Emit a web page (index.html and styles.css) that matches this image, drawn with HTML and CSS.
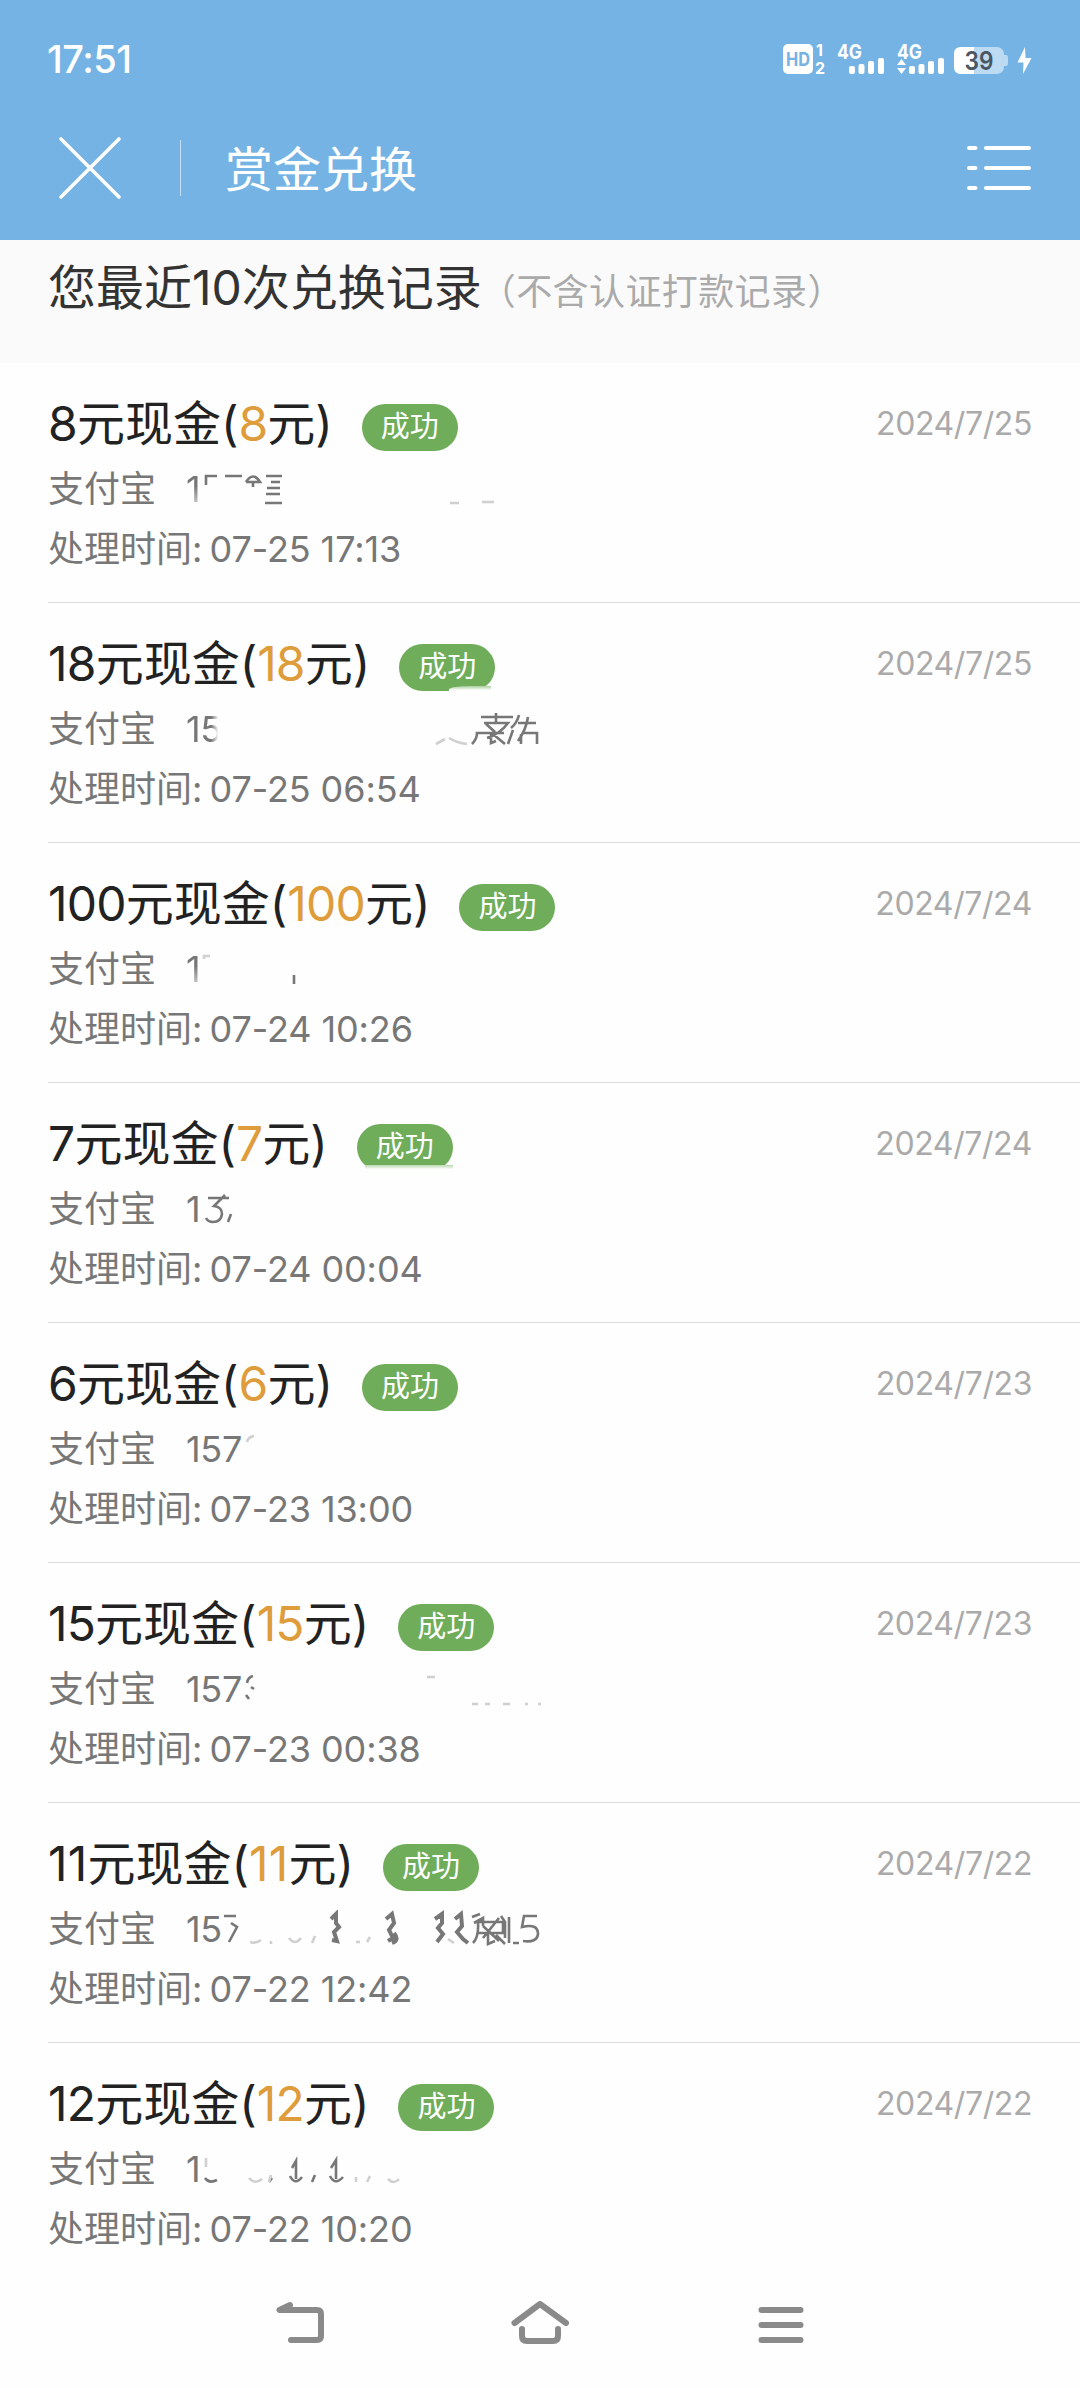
FILE: index.html
```html
<!DOCTYPE html>
<html lang="zh-CN">
<head>
    <meta charset="UTF-8">
    <meta name="viewport" content="width=device-width, initial-scale=1.0">
    <title>赏金兑换</title>
    <link rel="stylesheet" href="styles.css">
</head>
<body>
    <header>
        <div class="status-bar">
            <span class="clock">17:51</span>
            <svg class="status-icons" width="248" height="36" viewBox="783 41 248 36" fill="#fff">
                <!-- HD -->
                <rect x="783" y="44" width="30" height="30" rx="5"/>
                <text x="786" y="66" font-size="19" font-weight="700" fill="#74b3e3" textLength="24" lengthAdjust="spacingAndGlyphs">HD</text>
                <text x="816" y="56" font-size="16" font-weight="700">1</text>
                <text x="815" y="74" font-size="16" font-weight="700">2</text>
                <!-- SIM 1 -->
                <text x="837" y="59" font-size="20" font-weight="700" textLength="25" lengthAdjust="spacingAndGlyphs">4G</text>
                <rect x="849" y="66" width="6" height="8" rx="2"/>
                <rect x="858.5" y="64" width="6" height="10" rx="2"/>
                <rect x="868" y="61" width="6" height="13" rx="2"/>
                <rect x="878" y="58" width="6" height="16" rx="2"/>
                <!-- SIM 2 -->
                <text x="897" y="59" font-size="20" font-weight="700" textLength="25" lengthAdjust="spacingAndGlyphs">4G</text>
                <path d="M897 65l4.500-6 4.500 6zM897 68l4.500 6 4.500-6z"/>
                <rect x="909" y="66" width="6" height="8" rx="2"/>
                <rect x="918.500" y="64" width="6" height="10" rx="2"/>
                <rect x="928" y="61" width="6" height="13" rx="2"/>
                <rect x="938" y="58" width="6" height="16" rx="2"/>
                <!-- battery -->
                <rect x="954" y="47" width="50" height="27" rx="7" fill="#bcdaf2"/>
                <path d="M1004 55h2q2 0 2 3v5q0 3-2 3h-2z" fill="#bcdaf2"/>
                <path d="M961 47h13v27h-13q-7 0-7-7v-13q0-7 7-7z"/>
                <text x="964.500" y="69.500" font-size="25" font-weight="600" fill="#4a5662" textLength="29" lengthAdjust="spacingAndGlyphs">39</text>
                <path d="M1025 47l-7.500 15.500h6l-0.500 11.500 8.500-16h-6z"/>
            </svg>
        </div>
        <div class="nav">
            <svg class="close" width="64" height="64" viewBox="0 0 64 64" fill="none" stroke="#fff" stroke-width="3.600" stroke-linecap="round">
                <path d="M3 3l58 58M61 3L3 61"/>
            </svg>
            <i class="divider"></i>
            <h1>赏金兑换</h1>
            <svg class="menu" width="64" height="46" viewBox="0 0 64 46" fill="none" stroke="#fff" stroke-width="4" stroke-linecap="round">
                <path d="M2 3h6.500M19 3h43M2 23h6.500M19 23h43M2 43h6.500M19 43h43"/>
            </svg>
        </div>
    </header>

    <div class="section-title">
        <h2>您最近10次兑换记录</h2>
        <small>（不含认证打款记录）</small>
    </div>

    <ul class="records">
        <li>
            <div class="top">
                <span class="amount"><b>8</b>元现金(<em>8</em>元)</span><span class="badge">成功</span>
                <span class="date">2024/7/25</span>
            </div>
            <div class="pay">支付宝<span class="acct fade-down">1</span>
                <svg class="rub" width="370" height="40">
                    <path d="M19 15V6H30M38 6H55M59 12Q66 1 73 12H59M66 12V17M79 6H95M84 12H93M80 18H93M79 24H93M78 33H95"/>
                    <path class="faint" d="M263 33H272M295 32H307"/>
                </svg>
            </div>
            <div class="time">处理时间: <span class="n">07-25 17:13</span></div>
        </li>
        <li>
            <div class="top">
                <span class="amount"><b>18</b>元现金(<em>18</em>元)</span><span class="badge wiped-corner">成功</span>
                <span class="date">2024/7/25</span>
            </div>
            <div class="pay">支付宝<span class="acct fade-right">15</span>
                <svg class="rub" width="370" height="40">
                    <path class="faint" d="M249 34L258 29M262 28Q270 33 280 34"/>
                    <path d="M294 7H326M309 3V13M297 13H321Q313 24 300 28M299 14L308 22M285 34Q290 29 290 23H317M304 24V33L309 31M307 25L318 34M332 5Q330 13 324 18M326 20L321 34M331 13H349M341 7Q339 20 331 31M335 23H350V34M334 24V34"/>
                </svg>
            </div>
            <div class="time">处理时间: <span class="n">07-25 06:54</span></div>
        </li>
        <li>
            <div class="top">
                <span class="amount"><b>100</b>元现金(<em>100</em>元)</span><span class="badge">成功</span>
                <span class="date">2024/7/24</span>
            </div>
            <div class="pay">支付宝<span class="acct fade-down">1</span>
                <svg class="rub" width="370" height="40">
                    <path class="faint" d="M17 9V6H23"/>
                    <path d="M107 25V34"/>
                </svg>
            </div>
            <div class="time">处理时间: <span class="n">07-24 10:26</span></div>
        </li>
        <li>
            <div class="top">
                <span class="amount"><b>7</b>元现金(<em>7</em>元)</span><span class="badge wiped-bottom">成功</span>
                <span class="date">2024/7/24</span>
            </div>
            <div class="pay">支付宝<span class="acct">1</span>
                <svg class="rub" width="370" height="40">
                    <path d="M21 8H42M38 5L27 16Q35 17 35 24Q34 32 26 32Q21 32 19 28M44 24L41 32"/>
                </svg>
            </div>
            <div class="time">处理时间: <span class="n">07-24 00:04</span></div>
        </li>
        <li>
            <div class="top">
                <span class="amount"><b>6</b>元现金(<em>6</em>元)</span><span class="badge">成功</span>
                <span class="date">2024/7/23</span>
            </div>
            <div class="pay">支付宝<span class="acct">157</span>
                <svg class="rub" width="370" height="40">
                    <path class="faint" d="M60 12Q61 7 67 6"/>
                </svg>
            </div>
            <div class="time">处理时间: <span class="n">07-23 13:00</span></div>
        </li>
        <li>
            <div class="top">
                <span class="amount"><b>15</b>元现金(<em>15</em>元)</span><span class="badge">成功</span>
                <span class="date">2024/7/23</span>
            </div>
            <div class="pay">支付宝<span class="acct">157</span>
                <svg class="rub" width="370" height="40">
                    <path d="M60 13Q61 7 66 6M64 17L67 19M59 25L62 29"/>
                    <path class="faint" d="M240 7H248M285 34H291M298 34H303M316 34H323M338 34H341M351 34H354"/>
                </svg>
            </div>
            <div class="time">处理时间: <span class="n">07-23 00:38</span></div>
        </li>
        <li>
            <div class="top">
                <span class="amount ones"><b>11</b>元现金(<em>11</em>元)</span><span class="badge">成功</span>
                <span class="date">2024/7/22</span>
            </div>
            <div class="pay">支付宝<span class="acct">15</span>
                <svg class="rub" width="370" height="40">
                    <path d="M37 6H49M44 13L50 17L42 32"/>
                    <path class="heavy" d="M144 9L149 4V13L152 17L147 22L150 31L145 30M199 9L205 4L207 13L202 20L206 28L201 31M207 23Q213 30 205 33M248 9L255 4V13L251 18L256 24L250 32M268 9L274 4L275 16L270 22L276 29L281 33"/>
                    <path d="M285 7L293 4M287 13L296 8V16M286 33Q292 27 291 12H316V23H291M296 16L312 31M312 8L296 28M301 24V34L308 31M309 25L318 34M314 6L318 12V28M322 7V33M350 6H337L335 17Q351 13 351 24Q350 33 336 31M326 33H332"/>
                    <path class="faint" d="M63 32Q69 34 74 30M84 31V34M102 28Q108 36 114 28M128 26L125 33M169 32H173M180 32L183 27M261 29L267 33"/>
                </svg>
            </div>
            <div class="time">处理时间: <span class="n">07-22 12:42</span></div>
        </li>
        <li>
            <div class="top">
                <span class="amount"><b>12</b>元现金(<em>12</em>元)</span><span class="badge">成功</span>
                <span class="date">2024/7/22</span>
            </div>
            <div class="pay">支付宝<span class="acct">1</span>
                <svg class="rub" width="370" height="40">
                    <path d="M18 28Q22 34 30 30M105 18L109 11V29M103 26Q108 36 115 27M128 25L125 32M144 18L149 10V29M143 26Q148 36 156 27M85 28L82 32"/>
                    <path class="faint" d="M19 8V17M62 28Q68 35 75 29M84 25L82 32M169 27V32M183 26L180 32M201 29Q207 35 212 29"/>
                </svg>
            </div>
            <div class="time">处理时间: <span class="n">07-22 10:20</span></div>
        </li>
    </ul>

    <footer>
        <svg width="50" height="44" viewBox="275 2301 50 44">
            <path d="M290 2305L279.500 2310H317Q321 2310 321 2314V2336Q321 2340 317 2340H291"/>
        </svg>
        <svg class="home" width="58" height="44" viewBox="511 2300 58 44">
            <path d="M514.500 2322L540 2303L566 2322M522 2328V2335Q522 2340 527 2340H553Q558 2340 558 2335V2328"/>
        </svg>
        <svg width="46" height="44" viewBox="757.500 2301 46 44">
            <path d="M761 2310H800M761 2325H800M761 2340H800"/>
        </svg>
    </footer>
</body>
</html>
```
FILE: styles.css
```css
* { box-sizing: border-box; }
body { margin: 0; width: 1080px; height: 2388px; overflow: hidden; background-color: #fefefe; color: #222; font-family: Inter, "Noto Sans CJK SC", sans-serif; display: flex; flex-direction: column; }
h1, h2, ul { margin: 0; padding: 0; font-weight: 400; }

header { height: 240px; background-color: #74b3e3; color: #fff; }
.status-bar { height: 118px; padding: 0 49px 0 47px; display: flex; justify-content: space-between; align-items: center; }
.clock { font-size: 38px; font-weight: 500; letter-spacing: -0.5px; }
.status-icons { overflow: visible; }
.nav { height: 100px; padding: 0 49px 0 58px; display: flex; align-items: center; }
.divider { width: 1px; height: 56px; margin: 0 44px 0 58px; background-color: #c3e0f6; }
.nav h1 { font-size: 48px; line-height: 60px; padding-top: 3px; }
.menu { margin-left: auto; }

.section-title { height: 123px; padding: 16px 0 0 48px; background-color: #fafafa; display: flex; align-items: baseline; color: #333; }
.section-title h2 { font-size: 48px; line-height: 64px; }
.section-title small { font-size: 36px; letter-spacing: 0.4px; color: #aaa; margin-left: -2px; }

.records { list-style: none; margin-left: 48px; height: 1920px; }
.records li { height: 240px; padding-top: 31px; border-bottom: 1px solid #dcdcdc; }
.records li:last-child { border-bottom: none; }
.top { display: flex; height: 60px; margin-bottom: 5px; line-height: 60px; }
.amount { font-size: 48px; white-space: nowrap; }
.amount b, .amount em { font-weight: 400; font-style: normal; letter-spacing: -0.8px; }
.amount em { color: #df9c3a; }
.amount.ones b, .amount.ones em { letter-spacing: 0.2px; }
.badge { position: relative; width: 96px; height: 47px; margin: 10px 0 0 29px; border-radius: 24px; background-color: #6fad5b; color: #fff; font-size: 29px; line-height: 46px; text-align: center; }
.date { margin-left: auto; margin-right: 48px; font-size: 32px; letter-spacing: -0.4px; color: #aaa; }

/* rubbed-out edges of the badge */
.wiped-corner::after { content: ""; position: absolute; right: 4px; bottom: -2px; width: 42px; height: 7px; border-radius: 50% 0 0 0; background: linear-gradient(to bottom, #a9cf9c, #fefefe 60%); }
.wiped-bottom::after { content: ""; position: absolute; left: 8px; right: 0; bottom: -1px; height: 7px; background: linear-gradient(to bottom, #b9d8af, #fefefe 60%); }

.pay, .time { position: relative; height: 60px; font-size: 36px; line-height: 60px; color: #777; white-space: nowrap; }
.pay { display: flex; }
.time .n { margin-left: -3px; letter-spacing: -0.1px; }
.acct { margin-left: 30px; letter-spacing: -0.3px; }
.fade-down { -webkit-mask-image: linear-gradient(#000 45%, rgba(0, 0, 0, 0.4) 75%); mask-image: linear-gradient(#000 45%, rgba(0, 0, 0, 0.4) 75%); }
.fade-right { -webkit-mask-image: linear-gradient(to right, #000 70%, transparent 90%); mask-image: linear-gradient(to right, #000 70%, transparent 90%); }
.rub { position: absolute; left: 139px; top: 11px; fill: none; stroke: #777; stroke-width: 2.6; }
.rub .faint { stroke: #d0d0d0; }
.rub .heavy { stroke-width: 4; }

footer { flex: 1; padding: 18px 276px 0 275px; display: flex; justify-content: space-between; align-items: flex-start; }
footer svg { fill: none; stroke: #8a8a8a; stroke-width: 6; stroke-linecap: round; stroke-linejoin: round; }
footer .home { margin-right: 3px; }
```
